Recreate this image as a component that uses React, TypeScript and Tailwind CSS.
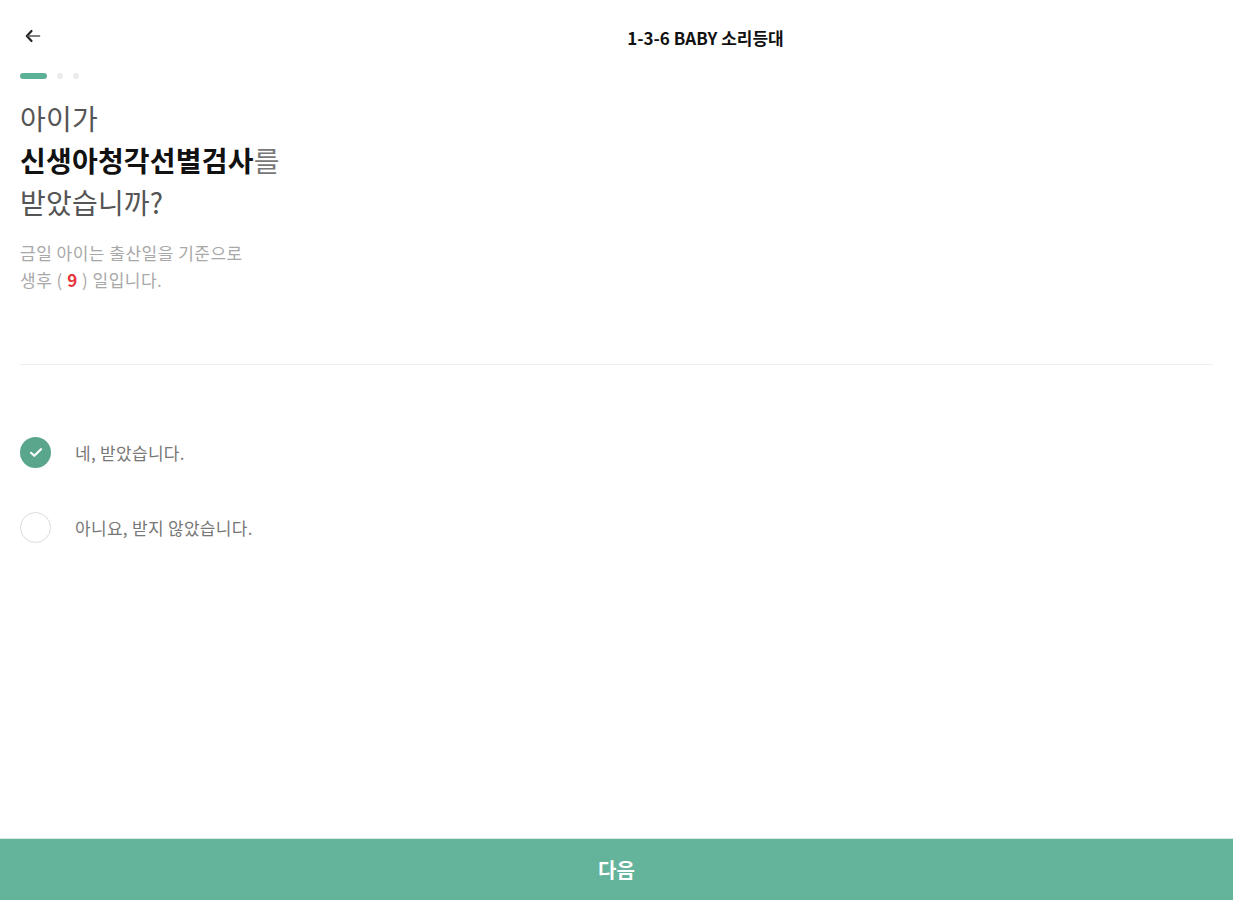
import React from "react";

export default function App() {
  const font = { fontFamily: '"Noto Sans CJK KR", "Noto Sans", sans-serif' };
  return (
    <div style={font} className="w-[1235px] h-[900px] bg-white flex flex-col overflow-hidden">
      <div className="flex-1 flex flex-col px-5">
        {/* header */}
        <div className="h-[48px] mt-[12px] flex items-center">
          <button className="w-[24px] h-[24px] flex items-center justify-start pl-[5px]">
            <svg width="16" height="14" viewBox="0 0 16 14" fill="none">
              <path d="M6.5 2L1.8 7L6.5 12" stroke="#222" strokeWidth="2.2" strokeLinecap="round" strokeLinejoin="round" />
              <path d="M2.5 7H14.5" stroke="#555" strokeWidth="1.6" strokeLinecap="round" />
            </svg>
          </button>
          <div className="flex-1 flex justify-center pl-[152px] pt-[4px]">
            <span className="text-[17px] font-bold text-[#111]">1-3-6 BABY 소리등대</span>
          </div>
        </div>

        {/* progress */}
        <div className="mt-[13px] flex items-center gap-[10px]">
          <div className="w-[27px] h-[6px] rounded-full bg-[#5bb095]" />
          <div className="w-[6px] h-[6px] rounded-full bg-[#ebebeb]" />
          <div className="w-[6px] h-[6px] rounded-full bg-[#ebebeb]" />
        </div>

        {/* heading */}
        <div className="mt-[18px] text-[28px] leading-[42px] text-[#555] tracking-[0.2px]">
          <div>아이가</div>
          <div>
            <span className="font-bold text-[#111]">신생아청각선별검사</span>
            <span className="text-[#777]">를</span>
          </div>
          <div>받았습니까?</div>
        </div>

        <div className="mt-[16px] text-[17px] leading-[27px] text-[#a8a8a8] tracking-[0.5px]">
          <div>금일 아이는 출산일을 기준으로</div>
          <div>
            생후 ( <span className="text-[#e8333b] font-bold">9</span> ) 일입니다.
          </div>
        </div>

        <div className="mt-[71px] h-px bg-[#eeeeee] mr-[2px]" />

        {/* options */}
        <div className="mt-[72px] flex flex-col gap-[44px]">
          <div className="flex items-center gap-[24px]">
            <div className="w-[31px] h-[31px] rounded-full bg-[#5aa68d] flex items-center justify-center">
              <svg width="14" height="11" viewBox="0 0 14 11" fill="none">
                <path d="M2 5.8L5.3 8.8L12 2.2" stroke="white" strokeWidth="2.2" strokeLinecap="round" strokeLinejoin="round" />
              </svg>
            </div>
            <span className="text-[17px] text-[#777] tracking-[0.3px]">네, 받았습니다.</span>
          </div>
          <div className="flex items-center gap-[24px]">
            <div className="w-[31px] h-[31px] rounded-full border border-[#dcdcdc] bg-white" />
            <span className="text-[17px] text-[#777] tracking-[0.3px]">아니요, 받지 않았습니다.</span>
          </div>
        </div>
      </div>

      {/* bottom button */}
      <div className="pr-[2px]">
        <button className="w-full h-[62px] bg-[#64b39b] border-t border-[#d8e6e0] flex items-center justify-center">
          <span className="text-[20px] font-bold text-white">다음</span>
        </button>
      </div>
    </div>
  );
}
